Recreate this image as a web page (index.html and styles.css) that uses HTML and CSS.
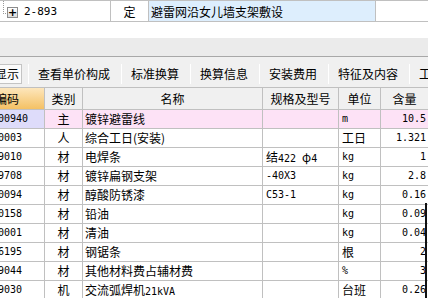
FILE: index.html
```html
<!DOCTYPE html>
<html lang="zh-CN">
<head>
  <meta charset="UTF-8"/>
  <meta name="viewport" content="width=device-width, initial-scale=1.0"/>
  <title>定额子目</title>
  <link rel="stylesheet" href="styles.css">
</head>
<body>
  <!-- 定额行 -->
  <div class="quota">
    <div class="q-code"><span class="tree"></span><span class="expand">+</span><span class="n">2-893</span></div>
    <div class="q-type">定</div>
    <div class="q-name">避雷网沿女儿墙支架敷设</div>
    <div class="q-rest"></div>
  </div>

  <div class="gap"></div>
  <div class="splitter"></div>

  <div class="tabs">
    <span class="tab on">显示</span>
    <span class="sep"></span><span class="tab">查看单价构成</span>
    <span class="sep"></span><span class="tab">标准换算</span>
    <span class="sep"></span><span class="tab">换算信息</span>
    <span class="sep"></span><span class="tab">安装费用</span>
    <span class="sep"></span><span class="tab">特征及内容</span>
    <span class="sep"></span><span class="tab">工</span>
  </div>

  <div class="grid">
    <div class="row head">
      <div class="c code">编码</div>
      <div class="c">类别</div>
      <div class="c">名称</div>
      <div class="c">规格及型号</div>
      <div class="c">单位</div>
      <div class="c">含量</div>
    </div>
    <div class="row main">
      <div class="c code n">00940</div>
      <div class="c kind">主</div>
      <div class="c name">镀锌避雷线</div>
      <div class="c spec"></div>
      <div class="c unit n">m</div>
      <div class="c qty n">10.5</div>
    </div>
    <div class="row">
      <div class="c code n">0003</div>
      <div class="c kind">人</div>
      <div class="c name">综合工日(安装)</div>
      <div class="c spec"></div>
      <div class="c unit">工日</div>
      <div class="c qty n">1.321</div>
    </div>
    <div class="row">
      <div class="c code n">9010</div>
      <div class="c kind">材</div>
      <div class="c name">电焊条</div>
      <div class="c spec">结<span class="n">422 </span>φ<span class="n">4</span></div>
      <div class="c unit n">kg</div>
      <div class="c qty n">1</div>
    </div>
    <div class="row">
      <div class="c code n">9708</div>
      <div class="c kind">材</div>
      <div class="c name">镀锌扁钢支架</div>
      <div class="c spec n">-40X3</div>
      <div class="c unit n">kg</div>
      <div class="c qty n">2.8</div>
    </div>
    <div class="row">
      <div class="c code n">0094</div>
      <div class="c kind">材</div>
      <div class="c name">醇酸防锈漆</div>
      <div class="c spec n">C53-1</div>
      <div class="c unit n">kg</div>
      <div class="c qty n">0.16</div>
    </div>
    <div class="row">
      <div class="c code n">0158</div>
      <div class="c kind">材</div>
      <div class="c name">铅油</div>
      <div class="c spec"></div>
      <div class="c unit n">kg</div>
      <div class="c qty n">0.09</div>
    </div>
    <div class="row">
      <div class="c code n">0001</div>
      <div class="c kind">材</div>
      <div class="c name">清油</div>
      <div class="c spec"></div>
      <div class="c unit n">kg</div>
      <div class="c qty n">0.04</div>
    </div>
    <div class="row">
      <div class="c code n">6195</div>
      <div class="c kind">材</div>
      <div class="c name">钢锯条</div>
      <div class="c spec"></div>
      <div class="c unit">根</div>
      <div class="c qty n">2</div>
    </div>
    <div class="row">
      <div class="c code n">9044</div>
      <div class="c kind">材</div>
      <div class="c name">其他材料费占辅材费</div>
      <div class="c spec"></div>
      <div class="c unit n">%</div>
      <div class="c qty n">3</div>
    </div>
    <div class="row">
      <div class="c code n">9030</div>
      <div class="c kind">机</div>
      <div class="c name">交流弧焊机<span class="n">21kVA</span></div>
      <div class="c spec"></div>
      <div class="c unit">台班</div>
      <div class="c qty n">0.26</div>
    </div>
  </div>

  <div class="edge"></div>
</body>
</html>
```

FILE: styles.css
```css
body { margin:0; width:428px; height:298px; overflow:hidden; position:relative; background:#fff; color:#000; font-family:"Noto Sans CJK SC", sans-serif; font-size:12px; }
.n { font-family:"DejaVu Sans Mono", "Noto Sans CJK SC", monospace; font-size:10px; }

/* 定额行 */
.quota { display:grid; grid-template-columns:111px 38px 227px 60px; height:22px; border-top:1px solid #c0c0c0; border-bottom:1px solid #c0c0c0; box-sizing:border-box; }
.quota > div { border-right:1px solid #c0c0c0; line-height:20px; padding-top:1px; white-space:nowrap; overflow:hidden; }
.q-code { position:relative; display:flex; align-items:center; }
.tree { position:absolute; left:3px; top:-1px; width:4px; height:13px; border-left:1px dotted #999; border-bottom:1px dotted #999; }
.expand { position:absolute; left:7px; top:6px; width:9px; height:9px; border:1px solid #8c8c8c; background:linear-gradient(#fff, #dcdcdc); font:bold 11px/9px "DejaVu Sans", sans-serif; text-align:center; }
.q-code .n { margin-left:24px; font-size:11px; }
.q-type { text-align:center; }
.q-name { background:#ddeefd; padding-left:2px; }

.gap { height:16px; }
.splitter { height:18px; background:#ebebeb; border-bottom:1px solid #a8a8a8; }

/* 页签 */
.tabs { display:flex; align-items:flex-start; height:30px; padding-top:7px; box-sizing:border-box; background:#f0f0f0; white-space:nowrap; }
.tab { line-height:20px; padding:0 11px 0 9px; }
.tab.on { margin-left:-8px; margin-right:6px; padding:0 2px; line-height:18px; border:1px solid #c4c4c4; background:#fbfbfb; }
.sep { width:1px; height:20px; background:#a0a0a0; border-right:1px solid #fff; }

/* 明细表 */
.grid { border-top:1px solid #c0c0c0; }
.row { display:grid; grid-template-columns:45px 38px 180px 76px 42px 48px; height:19px; }
.c { box-sizing:border-box; border-right:1px solid #c0c0c0; border-bottom:1px solid #c0c0c0; line-height:18px; white-space:nowrap; overflow:hidden; }
.head { height:22px; background:#f0f0f0; }
.head .c { line-height:21px; text-align:center; }
.head .code { text-align:left; text-indent:-5px; background:linear-gradient(#fde6bc, #f4c164); }
.code { text-indent:-2px; }
.kind { text-align:center; }
.name { padding-left:2px; }
.spec { padding-left:3px; }
.unit { padding-left:3px; }
.qty { text-align:right; padding-right:2px; }
.main .c { background:#fde2f6; }
.main .code { background:#dedcfa; }

.edge { position:absolute; left:425px; top:203px; width:2px; bottom:0; background:#111; }
```
